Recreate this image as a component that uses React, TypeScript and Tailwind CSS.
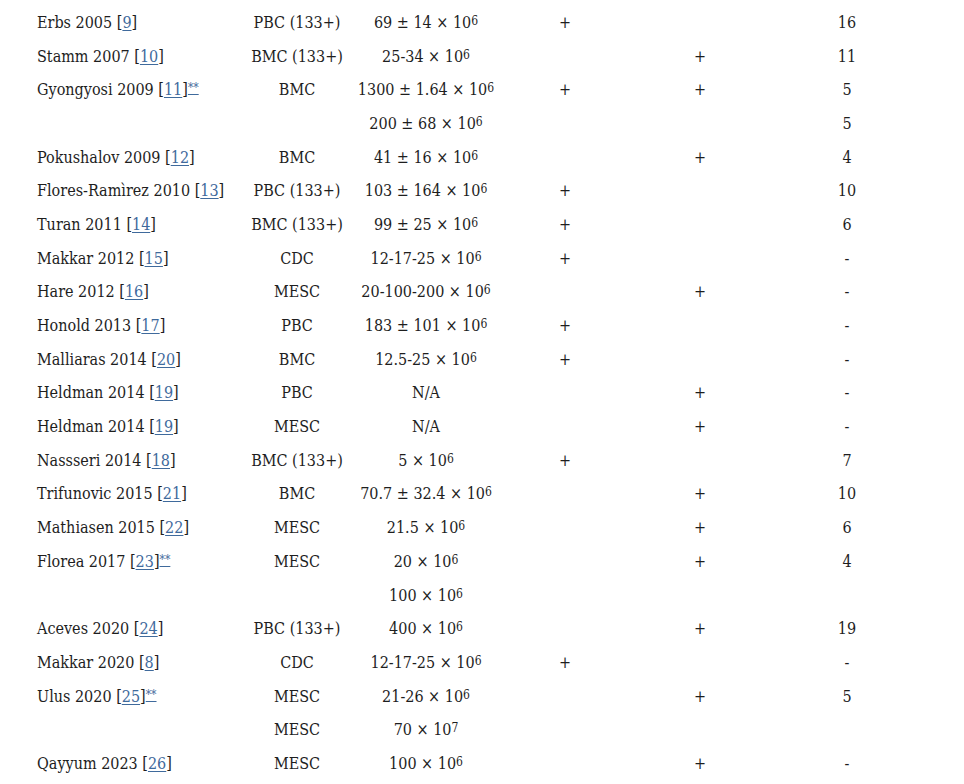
import React from 'react';

type Row = {
  name?: string;
  ref?: string;
  star?: boolean;
  cell?: string;
  dose?: [string, string] | 'na';
  a?: boolean;
  b?: boolean;
  n?: string;
};

const rows: Row[] = [
  { name: 'Erbs 2005', ref: '9', cell: 'PBC (133+)', dose: ['69 ± 14 × 10', '6'], a: true, n: '16' },
  { name: 'Stamm 2007', ref: '10', cell: 'BMC (133+)', dose: ['25-34 × 10', '6'], b: true, n: '11' },
  { name: 'Gyongyosi 2009', ref: '11', star: true, cell: 'BMC', dose: ['1300 ± 1.64 × 10', '6'], a: true, b: true, n: '5' },
  { dose: ['200 ± 68 × 10', '6'], n: '5' },
  { name: 'Pokushalov 2009', ref: '12', cell: 'BMC', dose: ['41 ± 16 × 10', '6'], b: true, n: '4' },
  { name: 'Flores-Ramìrez 2010', ref: '13', cell: 'PBC (133+)', dose: ['103 ± 164 × 10', '6'], a: true, n: '10' },
  { name: 'Turan 2011', ref: '14', cell: 'BMC (133+)', dose: ['99 ± 25 × 10', '6'], a: true, n: '6' },
  { name: 'Makkar 2012', ref: '15', cell: 'CDC', dose: ['12-17-25 × 10', '6'], a: true, n: '-' },
  { name: 'Hare 2012', ref: '16', cell: 'MESC', dose: ['20-100-200 × 10', '6'], b: true, n: '-' },
  { name: 'Honold 2013', ref: '17', cell: 'PBC', dose: ['183 ± 101 × 10', '6'], a: true, n: '-' },
  { name: 'Malliaras 2014', ref: '20', cell: 'BMC', dose: ['12.5-25 × 10', '6'], a: true, n: '-' },
  { name: 'Heldman 2014', ref: '19', cell: 'PBC', dose: 'na', b: true, n: '-' },
  { name: 'Heldman 2014', ref: '19', cell: 'MESC', dose: 'na', b: true, n: '-' },
  { name: 'Nassseri 2014', ref: '18', cell: 'BMC (133+)', dose: ['5 × 10', '6'], a: true, n: '7' },
  { name: 'Trifunovic 2015', ref: '21', cell: 'BMC', dose: ['70.7 ± 32.4 × 10', '6'], b: true, n: '10' },
  { name: 'Mathiasen 2015', ref: '22', cell: 'MESC', dose: ['21.5 × 10', '6'], b: true, n: '6' },
  { name: 'Florea 2017', ref: '23', star: true, cell: 'MESC', dose: ['20 × 10', '6'], b: true, n: '4' },
  { dose: ['100 × 10', '6'] },
  { name: 'Aceves 2020', ref: '24', cell: 'PBC (133+)', dose: ['400 × 10', '6'], b: true, n: '19' },
  { name: 'Makkar 2020', ref: '8', cell: 'CDC', dose: ['12-17-25 × 10', '6'], a: true, n: '-' },
  { name: 'Ulus 2020', ref: '25', star: true, cell: 'MESC', dose: ['21-26 × 10', '6'], b: true, n: '5' },
  { cell: 'MESC', dose: ['70 × 10', '7'] },
  { name: 'Qayyum 2023', ref: '26', cell: 'MESC', dose: ['100 × 10', '6'], b: true, n: '-' },
];

const link = 'text-[#3f6a9c] underline underline-offset-2 decoration-1';

export default function App() {
  return (
    <div className="min-h-screen bg-white pl-[37px] pt-[6px] text-[16px] text-[#1e1e1e] font-stretch-condensed font-['DejaVu_Serif_Condensed','DejaVu_Serif',serif]">
      {rows.map((r, i) => (
        <div key={i} className="grid h-[33.7px] grid-cols-[203px_114px_144px_134px_136px_158px] items-center leading-none">
          <div className="whitespace-nowrap">
            {r.name && (
              <>
                {r.name} [<span className={link}>{r.ref}</span>]
                {r.star && <sup className={`${link} relative -top-[3px] text-[12px]`}>**</sup>}
              </>
            )}
          </div>
          <div className="text-center whitespace-nowrap">{r.cell}</div>
          <div className="text-center whitespace-nowrap">
            {r.dose === 'na' ? 'N/A' : r.dose ? (
              <>
                {r.dose[0]}
                <sup className="relative -top-[3px] text-[12px]">{r.dose[1]}</sup>
              </>
            ) : null}
          </div>
          <div className="text-center">{r.a ? '+' : ''}</div>
          <div className="text-center">{r.b ? '+' : ''}</div>
          <div className="text-center">{r.n}</div>
        </div>
      ))}
    </div>
  );
}
